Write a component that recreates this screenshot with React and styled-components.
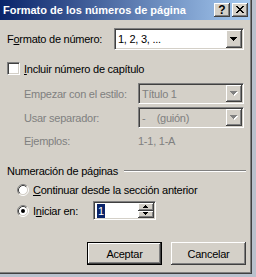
import React from 'react';
import styled, { createGlobalStyle } from 'styled-components';

const FACE = '#d4d0c8';

const GlobalStyle = createGlobalStyle`
  html, body {
    margin: 0;
    padding: 0;
  }
  body {
    background: #b9c1cd;
    font-family: "Liberation Sans", Tahoma, Arial, sans-serif;
    font-size: 11px;
    color: #000;
  }
`;

const Window = styled.div`
  width: 252px;
  height: 274px;
  box-sizing: border-box;
  background: ${FACE};
  border-right: 1px solid #404040;
  border-bottom: 1px solid #404040;
  box-shadow: inset -1px -1px 0 #808080;
  display: flex;
  flex-direction: column;
`;

const TitleBar = styled.div`
  height: 20px;
  flex: none;
  margin-right: 1px;
  padding: 0 2px 0 3px;
  display: flex;
  align-items: center;
  gap: 2px;
  background: linear-gradient(to right, #0a246a, #a6caf0);
`;

const TitleText = styled.div`
  flex: 1;
  color: #fff;
  font-weight: bold;
  font-size: 11px;
  white-space: nowrap;
  overflow: hidden;
`;

const raised = `
  box-shadow: inset -1px -1px 0 #404040, inset 1px 1px 0 #fff,
    inset -2px -2px 0 #808080, inset 2px 2px 0 ${FACE};
`;

const CaptionButton = styled.div`
  width: 16px;
  height: 14px;
  box-sizing: border-box;
  background: ${FACE};
  ${raised}
  display: flex;
  align-items: center;
  justify-content: center;
  font-weight: bold;
  font-size: 12px;
  line-height: 14px;
  padding-bottom: 1px;
`;

const Body = styled.div`
  display: flex;
  flex-direction: column;
  letter-spacing: -0.25px;
`;

const Row = styled.div`
  display: flex;
  align-items: center;
  height: ${p => p.$h || 13}px;
  margin-top: ${p => p.$mt || 0}px;
  padding-left: ${p => p.$indent ?? 7}px;
  padding-right: ${p => p.$right ?? 0}px;
  gap: ${p => p.$gap || 0}px;
  justify-content: ${p => (p.$end ? 'flex-end' : 'flex-start')};
`;

const Label = styled.span`
  flex: none;
  width: ${p => (p.$w ? `${p.$w}px` : 'auto')};
  color: ${p => (p.$disabled ? '#808080' : '#000')};
  white-space: nowrap;
`;

const Field = styled.div`
  box-sizing: border-box;
  width: ${p => p.$w}px;
  height: 100%;
  flex: none;
  display: flex;
  align-items: center;
  background: ${p => (p.$disabled ? FACE : '#fff')};
  color: ${p => (p.$disabled ? '#808080' : '#000')};
  border: 1px solid;
  border-color: #808080 #fff #fff #808080;
  box-shadow: inset 1px 1px 0 #404040, inset -1px -1px 0 ${FACE};
  padding: 1px 1px 1px 3px;
  white-space: nowrap;
`;

const FieldText = styled.span`
  flex: 1;
`;

const DropButton = styled.div`
  width: 16px;
  height: 100%;
  flex: none;
  box-sizing: border-box;
  background: ${FACE};
  ${raised}
  display: flex;
  align-items: center;
  justify-content: center;
`;

const Selected = styled.span`
  background: #0a246a;
  color: #fff;
  line-height: 14px;
  padding: 0 1px;
`;

const SpinStack = styled.div`
  width: 16px;
  height: 100%;
  flex: none;
  margin-left: auto;
  display: flex;
  flex-direction: column;
`;

const SpinHalf = styled.div`
  flex: 1;
  box-sizing: border-box;
  background: ${FACE};
  ${raised}
  display: flex;
  align-items: center;
  justify-content: center;
`;

const Check = styled.span`
  width: 13px;
  height: 13px;
  box-sizing: border-box;
  flex: none;
  background: #fff;
  border: 1px solid;
  border-color: #808080 #fff #fff #808080;
  box-shadow: inset 1px 1px 0 #404040, inset -1px -1px 0 ${FACE};
  margin-right: 4px;
`;

const Separator = styled.div`
  flex: 1;
  height: 0;
  border-top: 1px solid #808080;
  border-bottom: 1px solid #fff;
  margin-left: 6px;
`;

const PushButton = styled.button`
  width: 75px;
  height: 23px;
  box-sizing: border-box;
  padding: 0;
  background: ${FACE};
  font: inherit;
  letter-spacing: inherit;
  color: #000;
  border: ${p => (p.$default ? '1px solid #000' : 'none')};
  ${raised}
`;

const RadioIcon = styled.svg`
  flex: none;
  margin-right: 4px;
`;

const XGlyph = () => {
  const rows = ['11000011', '01100110', '00111100', '00011000', '00111100', '01100110', '11000011'];
  return (
    <svg width="8" height="7" shapeRendering="crispEdges">
      {rows.map((r, y) =>
        r.split('').map((c, x) => (c === '1' ? <rect key={`${x}-${y}`} x={x} y={y} width="1" height="1" fill="#000" /> : null))
      )}
    </svg>
  );
};

const Arrow = ({ disabled, up, small }) => {
  const w = small ? 5 : 7;
  const h = small ? 3 : 4;
  const pts = up ? `0,${h} ${w},${h} ${w / 2},0` : `0,0 ${w},0 ${w / 2},${h}`;
  return (
    <svg width={w + 1} height={h + 1} shapeRendering="crispEdges">
      {disabled && <polygon points={pts} fill="#fff" transform="translate(1,1)" />}
      <polygon points={pts} fill={disabled ? '#808080' : '#000'} />
    </svg>
  );
};

const Radio = ({ checked }) => (
  <RadioIcon width="12" height="12" viewBox="0 0 12 12">
    <circle cx="6" cy="6" r="4.5" fill="#fff" />
    <path d="M2.11 9.89 A5.5 5.5 0 0 1 9.89 2.11" stroke="#808080" fill="none" />
    <path d="M9.89 2.11 A5.5 5.5 0 0 1 2.11 9.89" stroke="#fff" fill="none" />
    <path d="M2.82 9.18 A4.5 4.5 0 0 1 9.18 2.82" stroke="#404040" fill="none" />
    <path d="M9.18 2.82 A4.5 4.5 0 0 1 2.82 9.18" stroke={FACE} fill="none" />
    {checked && <circle cx="6" cy="6" r="2" fill="#000" />}
  </RadioIcon>
);

const Combo = ({ w, disabled, children }) => (
  <Field $w={w} $disabled={disabled}>
    <FieldText>{children}</FieldText>
    <DropButton>
      <Arrow disabled={disabled} />
    </DropButton>
  </Field>
);

export default function App() {
  return (
    <>
      <GlobalStyle />
      <Window>
        <TitleBar>
          <TitleText>Formato de los números de página</TitleText>
          <CaptionButton>?</CaptionButton>
          <CaptionButton>
            <XGlyph />
          </CaptionButton>
        </TitleBar>
        <Body>
          <Row $mt={8} $h={22}>
            <Label $w={107}>
              F<u>o</u>rmato de número:
            </Label>
            <Combo w={130}>1, 2, 3, ...</Combo>
          </Row>
          <Row $mt={12}>
            <Check />
            <Label>
              <u>I</u>ncluir número de capítulo
            </Label>
          </Row>
          <Row $mt={8} $h={21} $indent={24}>
            <Label $w={114} $disabled>
              Empezar con el estilo:
            </Label>
            <Combo w={106} disabled>
              Título 1
            </Combo>
          </Row>
          <Row $mt={3} $h={21} $indent={24}>
            <Label $w={114} $disabled>
              Usar separador:
            </Label>
            <Combo w={106} disabled>
              -&nbsp;&nbsp;&nbsp;&nbsp;(guión)
            </Combo>
          </Row>
          <Row $mt={6} $indent={24}>
            <Label $w={114} $disabled>
              Ejemplos:
            </Label>
            <Label $disabled>1-1, 1-A</Label>
          </Row>
          <Row $mt={17} $h={14} $right={5}>
            <Label>Numeración de páginas</Label>
            <Separator />
          </Row>
          <Row $mt={6} $h={12} $indent={17}>
            <Radio />
            <Label>
              <u>C</u>ontinuar desde la sección anterior
            </Label>
          </Row>
          <Row $mt={5} $h={19} $indent={17}>
            <Radio checked />
            <Label $w={60}>
              I<u>n</u>iciar en:
            </Label>
            <Field $w={63}>
              <Selected>1</Selected>
              <SpinStack>
                <SpinHalf>
                  <Arrow up small />
                </SpinHalf>
                <SpinHalf>
                  <Arrow small />
                </SpinHalf>
              </SpinStack>
            </Field>
          </Row>
          <Row $mt={22} $h={23} $end $right={5} $gap={9}>
            <PushButton $default>Aceptar</PushButton>
            <PushButton>Cancelar</PushButton>
          </Row>
        </Body>
      </Window>
    </>
  );
}
